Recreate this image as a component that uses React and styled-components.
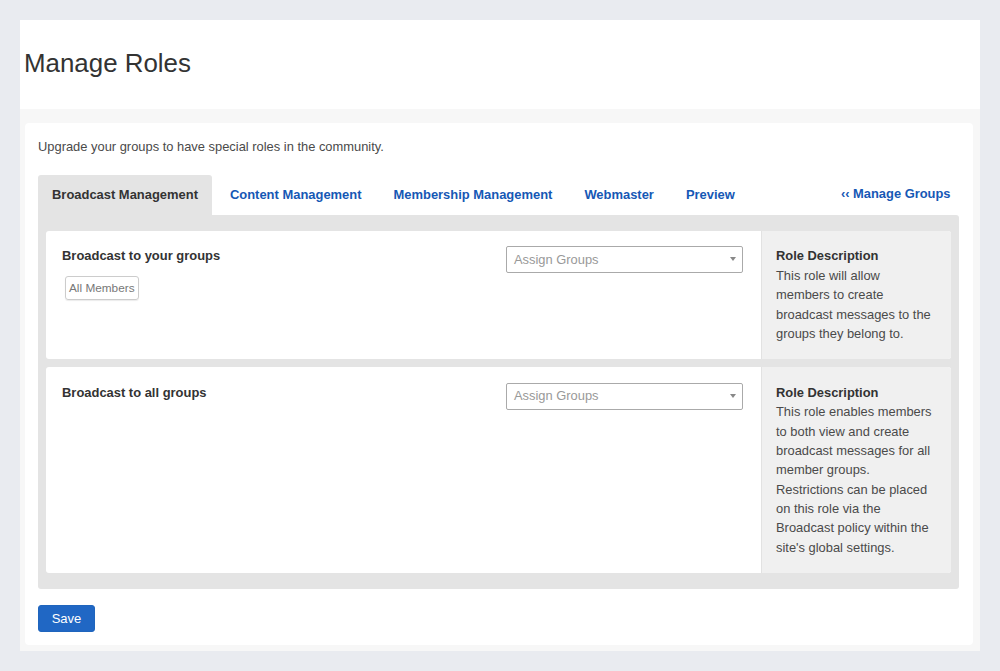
import styled, { createGlobalStyle } from "styled-components";

const GlobalStyle = createGlobalStyle`
  html, body {
    margin: 0;
    padding: 0;
    background: #e9ebf0;
  }
  * {
    box-sizing: border-box;
  }
  body {
    font-family: "Liberation Sans", Arial, sans-serif;
    font-size: 12.9px;
    line-height: 19.3px;
    color: #4a4a4a;
  }
`;

const Page = styled.div`
  padding: 20px;
  height: 671px;
`;

const Shell = styled.div`
  height: 631px;
  background: #f7f7f7;
  display: flex;
  flex-direction: column;
`;

const Header = styled.header`
  height: 89px;
  background: #fff;
  display: flex;
  align-items: center;
  padding-left: 4px;
  padding-bottom: 4px;
`;

const Title = styled.h1`
  margin: 0;
  font-size: 25.9px;
  font-weight: 400;
  line-height: 36px;
  color: #333;
`;

const Card = styled.main`
  margin: 14px 7px 6px 5px;
  flex: 1;
  background: #fff;
  border-radius: 4px;
  padding: 14px 14.5px 13px 13px;
`;

const Intro = styled.p`
  margin: 0;
  height: 38px;
  line-height: 19px;
`;

const TabBar = styled.nav`
  height: 40px;
  display: flex;
`;

const Tab = styled.a`
  height: 40px;
  padding: 0 14px;
  margin-right: 4px;
  display: flex;
  align-items: center;
  font-size: 12.95px;
  font-weight: 700;
  color: ${props => props.$active ? "#333" : "#1658b5"};
  background: ${props => props.$active ? "#e4e4e4" : "transparent"};
  border-radius: 3px 3px 0 0;
`;

const BackLink = styled.a`
  margin-left: auto;
  padding: 0 8px 3px 0;
  display: flex;
  align-items: center;
  font-weight: 700;
  color: #1658b5;
`;

const Panel = styled.section`
  background: #e4e4e4;
  border-radius: 0 3px 3px 3px;
  padding: 15.6px 8px 16px;
  display: flex;
  flex-direction: column;
  gap: 8px;
`;

const Row = styled.article`
  height: ${props => props.$height}px;
  background: #fff;
  border-radius: 3px;
  display: flex;
`;

const RoleMain = styled.div`
  flex: 1;
  padding: 15.6px 17px 0 16px;
  display: grid;
  grid-template-columns: 1fr 238px;
  align-content: start;
`;

const RoleName = styled.h3`
  margin: 0;
  font-size: 12.95px;
  font-weight: 700;
  line-height: 19px;
  color: #333;
`;

const Select = styled.div`
  height: 27px;
  border: 1px solid #aaa;
  border-radius: 2px;
  background: #fff;
  padding: 0 6px 0 7px;
  display: flex;
  align-items: center;
  justify-content: space-between;
  margin-right: 1px;
  color: #999;
`;

const Caret = styled.span`
  width: 0;
  height: 0;
  margin-top: -1px;
  border-left: 3px solid transparent;
  border-right: 3px solid transparent;
  border-top: 4px solid #888;
`;

const Chips = styled.div`
  margin-top: 3px;
  padding-left: 3px;
`;

const Chip = styled.span`
  display: inline-flex;
  align-items: center;
  height: 24px;
  padding: 0 3px;
  border: 1px solid #ccc;
  border-radius: 3px;
  font-size: 11.8px;
  color: #777;
  box-shadow: 0 1px 1px rgba(0, 0, 0, 0.08);
`;

const Description = styled.aside`
  width: 189.5px;
  background: #f0f0f0;
  border-left: 1px solid #e2e2e2;
  border-radius: 0 3px 3px 0;
  padding: 15.6px 14px 0 14px;
`;

const DescTitle = styled.strong`
  display: block;
  margin-bottom: 0.6px;
  color: #333;
`;

const SaveButton = styled.button`
  margin-top: 16px;
  width: 57px;
  height: 27px;
  padding: 0;
  border: 1px solid #1f65bd;
  border-radius: 3px;
  background: #2067c4;
  color: #fff;
  font: 13px "Liberation Sans", Arial, sans-serif;
`;

const roles = [
  {
    name: "Broadcast to your groups",
    height: 128.4,
    chips: ["All Members"],
    text: "This role will allow members to create broadcast messages to the groups they belong to.",
  },
  {
    name: "Broadcast to all groups",
    height: 206,
    chips: [],
    text: "This role enables members to both view and create broadcast messages for all member groups. Restrictions can be placed on this role via the Broadcast policy within the site's global settings.",
  },
];

const tabs = ["Broadcast Management", "Content Management", "Membership Management", "Webmaster", "Preview"];

export default function App() {
  return (
    <Page>
      <GlobalStyle />
      <Shell>
        <Header>
          <Title>Manage Roles</Title>
        </Header>
        <Card>
          <Intro>Upgrade your groups to have special roles in the community.</Intro>
          <TabBar>
            {tabs.map((tab, i) => (
              <Tab key={tab} $active={i === 0}>{tab}</Tab>
            ))}
            <BackLink>‹‹ Manage Groups</BackLink>
          </TabBar>
          <Panel>
            {roles.map(role => (
              <Row key={role.name} $height={role.height}>
                <RoleMain>
                  <RoleName>{role.name}</RoleName>
                  <Select>
                    Assign Groups
                    <Caret />
                  </Select>
                  {role.chips.length > 0 && (
                    <Chips>
                      {role.chips.map(chip => <Chip key={chip}>{chip}</Chip>)}
                    </Chips>
                  )}
                </RoleMain>
                <Description>
                  <DescTitle>Role Description</DescTitle>
                  {role.text}
                </Description>
              </Row>
            ))}
          </Panel>
          <SaveButton>Save</SaveButton>
        </Card>
      </Shell>
    </Page>
  );
}
